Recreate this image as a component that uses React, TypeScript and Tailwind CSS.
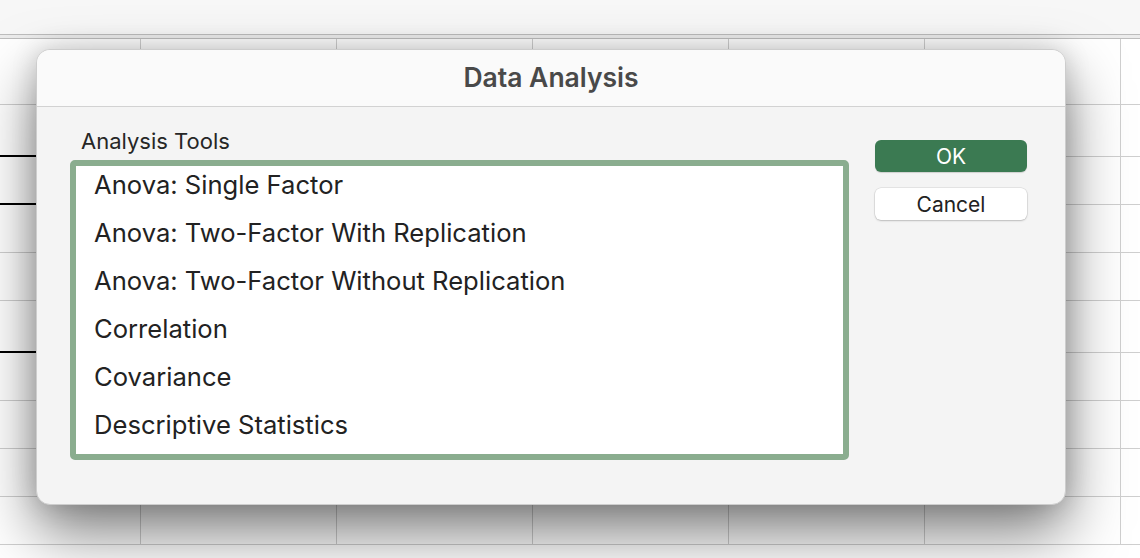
const tools = [
  'Anova: Single Factor',
  'Anova: Two-Factor With Replication',
  'Anova: Two-Factor Without Replication',
  'Correlation',
  'Covariance',
  'Descriptive Statistics',
]

// row heights of the sheet behind the dialog, and which rows get a thick black edge in column A
const rows = [
  { h: 66, dark: false },
  { h: 52, dark: true },
  { h: 48, dark: true },
  { h: 48, dark: false },
  { h: 48, dark: false },
  { h: 52, dark: true },
  { h: 48, dark: false },
  { h: 48, dark: false },
  { h: 48, dark: false },
  { h: 48, dark: false },
]

function Sheet() {
  return (
    <div className="flex flex-col">
      <div className="h-[34px] bg-[#f7f7f7]" />
      <div className="h-[5px] border-y border-[#bdbdbd] bg-[#ececec]" />
      {rows.map((r, i) => (
        <div key={i} className="flex" style={{ height: r.h }}>
          <div
            className={
              r.dark
                ? 'w-[141px] shrink-0 border-r border-b-2 border-r-[#cfcfcf] border-b-black bg-white'
                : 'w-[141px] shrink-0 border-r border-b border-[#cfcfcf] bg-white'
            }
          />
          {[0, 1, 2, 3, 4].map((c) => (
            <div key={c} className="w-[196px] shrink-0 border-r border-b border-[#cfcfcf] bg-white" />
          ))}
          <div className="flex-1 border-b border-[#cfcfcf] bg-white" />
        </div>
      ))}
    </div>
  )
}

export default function App() {
  return (
    <div
      className="relative h-[558px] w-[1140px] overflow-hidden bg-white"
      style={{ fontFamily: 'Inter, "Noto Sans", sans-serif' }}
    >
      <Sheet />
      <div className="absolute left-[36px] top-[49px] flex h-[456px] w-[1030px] flex-col overflow-hidden rounded-[14px] border border-[#cdcdcd] bg-[#f4f4f4] shadow-[0_28px_60px_rgba(0,0,0,0.5),0_0_26px_rgba(0,0,0,0.16)]">
        <div className="flex h-[57px] shrink-0 items-center justify-center border-b border-[#d2d2d2] bg-[#fafafa]">
          <span className="text-[26.5px] font-semibold text-[#494949]">Data Analysis</span>
        </div>
        <div className="flex pl-[33px] pr-[38px] pt-[20px]">
          <div className="flex w-[780px] flex-col">
            <div className="ml-[11px] text-[22px] leading-[28px] text-[#262626]">Analysis Tools</div>
            <div className="mt-[5px] h-[300px] overflow-hidden rounded-[5px] border-[6px] border-[#8aad8f] bg-white">
              <div className="-mt-[5px]">
                {tools.map((t) => (
                  <div key={t} className="flex h-[48px] items-center pl-[18px] text-[25.6px] text-[#222]">
                    {t}
                  </div>
                ))}
              </div>
            </div>
          </div>
          <div className="ml-[26px] mt-[13px] flex flex-col gap-[16px]">
            <button className="h-[32px] w-[152px] rounded-[6px] bg-[#3b7a52] text-[21px] leading-none text-white shadow-[0_1px_1px_rgba(0,0,0,0.15)]">
              OK
            </button>
            <button className="h-[32px] w-[152px] rounded-[6px] bg-white text-[21px] leading-none text-[#222] shadow-[0_0_0_0.5px_rgba(0,0,0,0.12),0_1px_2px_rgba(0,0,0,0.18)]">
              Cancel
            </button>
          </div>
        </div>
      </div>
    </div>
  )
}
